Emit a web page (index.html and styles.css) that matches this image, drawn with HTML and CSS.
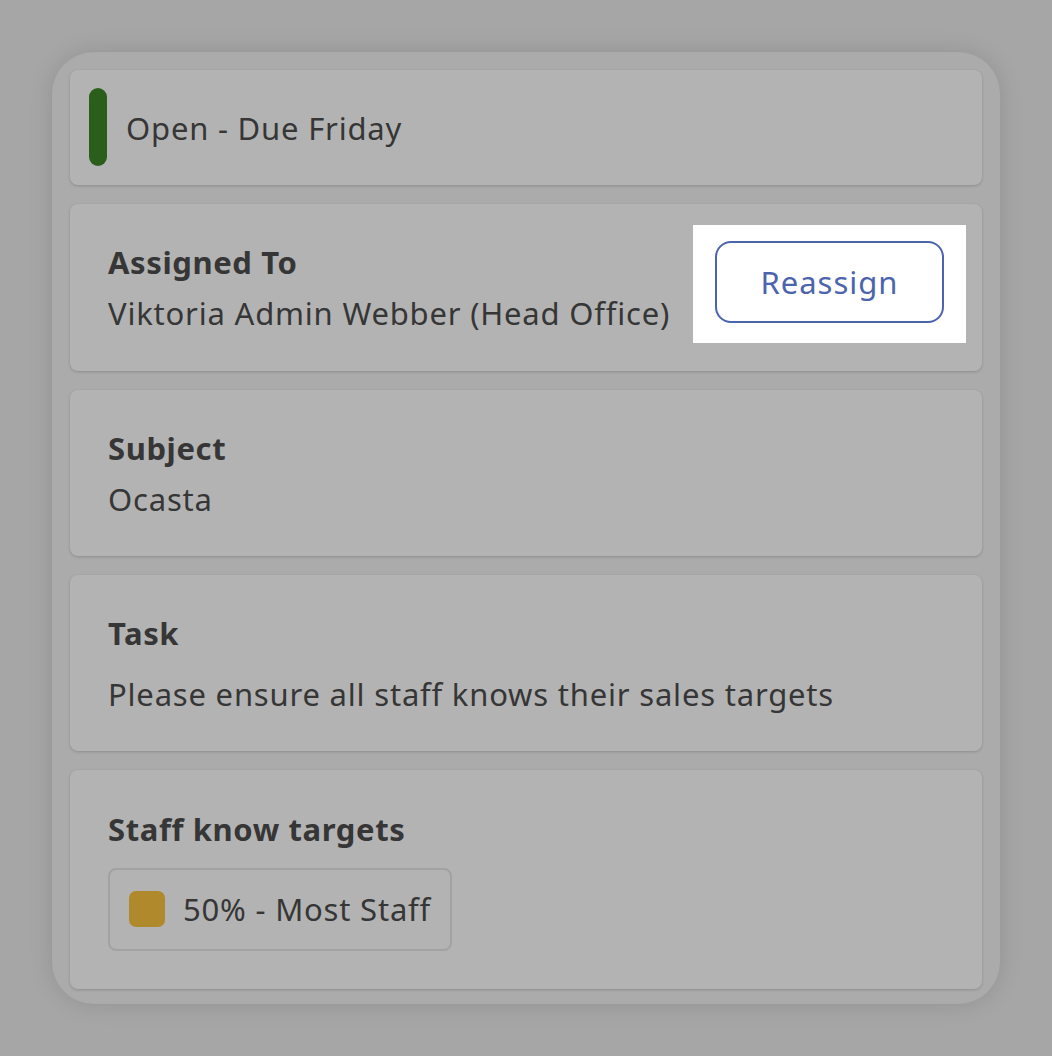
FILE: index.html
```html
<!DOCTYPE html>
<html>
<head>
<meta charset="utf-8">
<link rel="stylesheet" href="styles.css">
</head>
<body>
<div class="panel">
  <div class="card status">
    <span class="status-bar"></span>
    <span class="status-text">Open - Due Friday</span>
  </div>
  <div class="card field assigned">
    <div class="field-body">
      <div class="label">Assigned To</div>
      <div class="value">Viktoria Admin Webber (Head Office)</div>
    </div>
    <div class="spotlight">
      <button class="btn-outline">Reassign</button>
    </div>
  </div>
  <div class="card field subject">
    <div class="field-body">
      <div class="label">Subject</div>
      <div class="value">Ocasta</div>
    </div>
  </div>
  <div class="card field task">
    <div class="field-body">
      <div class="label">Task</div>
      <div class="value">Please ensure all staff knows their sales targets</div>
    </div>
  </div>
  <div class="card field rating">
    <div class="field-body">
      <div class="label">Staff know targets</div>
      <div class="chip"><span class="swatch"></span><span class="chip-text">50% - Most Staff</span></div>
    </div>
  </div>
</div>
</body>
</html>
```

FILE: styles.css
```css
html, body {
  margin: 0;
  padding: 0;
  background: #a6a6a6;
  font-family: "Noto Sans", "Open Sans", sans-serif;
  color: #363636;
}
body {
  width: 1052px;
  height: 1056px;
  padding: 52px;
  box-sizing: border-box;
}
.panel {
  width: 948px;
  height: 952px;
  box-sizing: border-box;
  background: #ababab;
  border-radius: 42px;
  padding: 18px 18px 15px;
  display: flex;
  flex-direction: column;
  gap: 19px;
  box-shadow: 0 0 24px rgba(0, 0, 0, 0.12);
}
.card {
  background: #b3b3b3;
  border-radius: 8px;
  box-shadow: 0 1px 3px rgba(0, 0, 0, 0.18);
  box-sizing: border-box;
  flex: none;
}
.status {
  height: 115px;
  display: flex;
  align-items: center;
  padding: 0 19px;
  gap: 19px;
}
.status-bar {
  width: 18px;
  height: 78px;
  border-radius: 9px;
  background: #2a5e1a;
  flex: none;
  margin-top: -2px;
}
.status-text,
.label,
.value,
.chip-text {
  font-size: 31px;
  line-height: 40px;
  letter-spacing: 0.8px;
}
.label {
  font-weight: 700;
  letter-spacing: 0.6px;
}
.field {
  display: flex;
  align-items: center;
  padding: 0 38px;
}
.field-body {
  flex: 1;
  display: flex;
  flex-direction: column;
}
.value {
  margin-top: 11px;
}
.assigned { height: 167px; }
.subject { height: 166px; }
.task { height: 176px; }
.task .value { margin-top: 21px; }
.rating { height: 219px; }
.spotlight {
  background: #ffffff;
  padding: 16px 22px 20px;
  margin-right: -22px;
  margin-top: -7px;
}
.btn-outline {
  display: block;
  width: 229px;
  height: 82px;
  box-sizing: border-box;
  border: 2px solid #4b64ad;
  border-radius: 16px;
  background: #ffffff;
  color: #4b64ad;
  font-family: "Noto Sans", "Open Sans", sans-serif;
  font-size: 31px;
  letter-spacing: 1px;
  padding: 0;
}
.chip {
  margin-top: 19px;
  align-self: flex-start;
  height: 83px;
  box-sizing: border-box;
  border: 2px solid #a2a2a2;
  border-radius: 8px;
  display: flex;
  align-items: center;
  padding: 0 19px 0 19px;
  gap: 18px;
}
.swatch {
  width: 36px;
  height: 36px;
  border-radius: 7px;
  background: #b0892c;
  flex: none;
}
```
